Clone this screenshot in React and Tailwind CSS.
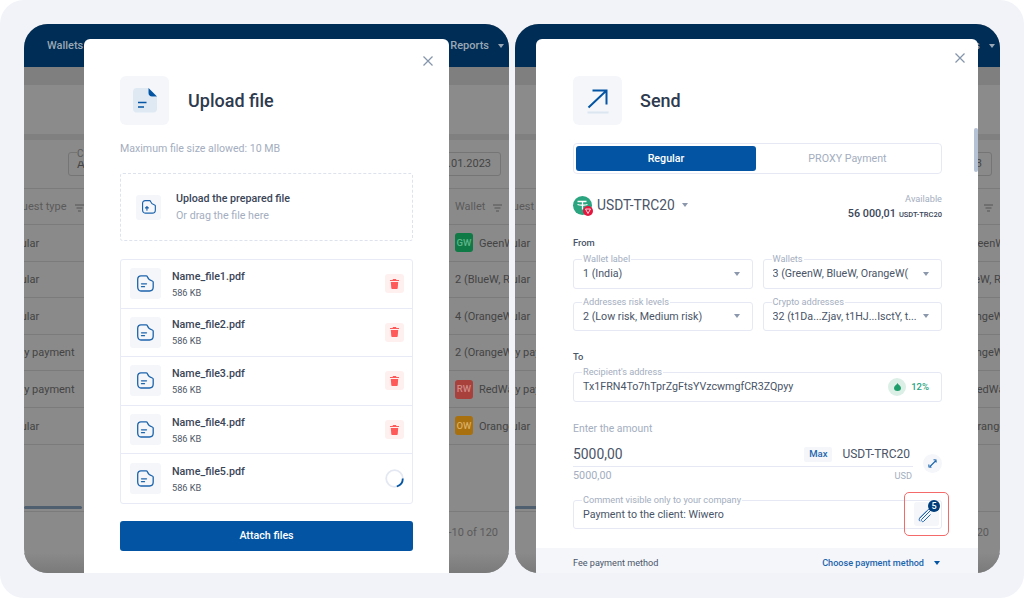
import React from 'react';

const rows = [
  { type: 'Regular', badge: 'GW', color: 'bg-[#0F7A45]', badgeText: 'text-[#5FB58A]', wallet: 'GeenWallet' },
  { type: 'Regular', wallet: '2 (BlueW, RedW)' },
  { type: 'Regular', wallet: '4 (OrangeW, BlueW)' },
  { type: 'Proxy payment', wallet: '2 (OrangeW, RedW)' },
  { type: 'Proxy payment', badge: 'RW', color: 'bg-[#A8403C]', badgeText: 'text-[#D08A86]', wallet: 'RedWallet' },
  { type: 'Regular', badge: 'OW', color: 'bg-[#A9700F]', badgeText: 'text-[#D9AE62]', wallet: 'OrangeWallet' },
];

const files = ['Name_file1.pdf', 'Name_file2.pdf', 'Name_file3.pdf', 'Name_file4.pdf', 'Name_file5.pdf'];

const Caret = ({ className = 'border-t-[#8B97AB]' }) => (
  <span className={`inline-block h-0 w-0 shrink-0 border-l-[3.5px] border-r-[3.5px] border-t-[4px] border-l-transparent border-r-transparent ${className}`} />
);

const FilterIcon = () => (
  <svg width="10" height="8" viewBox="0 0 10 8" fill="none" stroke="#555" strokeWidth="1">
    <path d="M0 1h9M1.5 4h6M3 7h3" />
  </svg>
);

const CloseIcon = () => (
  <svg width="10" height="10" viewBox="0 0 10 10" fill="none" stroke="#8494AA" strokeWidth="1.2">
    <path d="M.5.5l9 9M9.5.5l-9 9" />
  </svg>
);

const FileIcon = () => (
  <svg width="17" height="17" viewBox="0 0 17 17" fill="none" stroke="#1C64AC" strokeWidth="1.3" strokeLinejoin="round" strokeLinecap="round">
    <path d="M4 .8h5.200c.6 0 .9.3 1.100.8.600 2 2 3.400 5 4.400.6.2.9.5.9 1.100v5c0 2.200-1.500 3.900-3.700 3.900H4C1.900 16 .7 14.300.7 12.100V4.300C.7 2.300 2 .8 4 .8z" />
    <path d="M4.500 8.800h5M4.500 11.700h3" />
  </svg>
);

const UploadFileIcon = () => (
  <svg width="14" height="14" viewBox="0 0 17 17" fill="none" stroke="#1C64AC" strokeWidth="1.400" strokeLinejoin="round" strokeLinecap="round">
    <path d="M4 .8h5.200c.6 0 .9.3 1.100.8.600 2 2 3.400 5 4.400.6.2.9.5.9 1.100v5c0 2.200-1.500 3.900-3.700 3.900H4C1.900 16 .7 14.300.7 12.100V4.300C.7 2.300 2 .8 4 .8z" />
    <path d="M6 8v4.500M4.300 9.700L6 8l1.700 1.700" />
  </svg>
);

const TrashIcon = () => (
  <svg width="9" height="10" viewBox="0 0 9 10" fill="#FF5A5A">
    <path d="M3 0h3l.4 1H9v1H0V1h2.600L3 0zM.8 3h7.400l-.5 6.200c0 .5-.4.8-.8.800H2.100c-.4 0-.8-.3-.8-.8L.8 3z" />
  </svg>
);

const Spinner = () => (
  <svg width="19" height="19" viewBox="0 0 19 19" fill="none">
    <circle cx="9.500" cy="9.500" r="8.300" stroke="#E3E8F2" strokeWidth="1.800" />
    <path d="M17.800 9.500a8.300 8.300 0 0 1-6 8" stroke="#0355A3" strokeWidth="1.800" />
  </svg>
);

const Background = () => (
  <div className="absolute inset-0 flex flex-col bg-[#8A8A8A] text-[11px] text-[#444444]">
    <div className="flex h-[43px] shrink-0 items-center justify-between bg-[#002D55] pl-[23px] pr-[5px] pt-[1px] text-[11px] font-medium text-[#9AA8B6]">
      <span>Wallets</span>
      <span className="flex items-center gap-[9px]">
        Reports
        <Caret className="border-t-[#9AA8B6]" />
      </span>
    </div>
    <div className="h-[18px] shrink-0 bg-[#7F7F7F]" />
    <div className="h-[49px] shrink-0 bg-[#8B8B8B]" />
    <div className="h-[6px] shrink-0 bg-[#808080]" />
    <div className="flex h-[49px] shrink-0 items-center justify-between border-b border-[#7B7B7B] pl-[44px] pr-[8px]">
      <div className="relative flex h-[24px] w-[120px] items-center rounded-[3px] border border-[#757575] pl-[8px] text-[12px]">
        <span className="absolute -top-[7px] left-[8px] bg-[#8A8A8A] text-[10px] text-[#5A5A5A]">Currency</span>
        All
      </div>
      <div className="flex h-[24px] w-[120px] items-center justify-end rounded-[3px] border border-[#757575] pr-[9px]">01.01.2023</div>
    </div>
    <div className="flex h-[36px] shrink-0 items-center border-b border-[#7B7B7B] pt-[2px] text-[#5A5A5A]">
      <span className="-ml-[21px] flex w-[452px] shrink-0 items-center gap-[8px] whitespace-nowrap">
        Request type
        <FilterIcon />
      </span>
      <span className="flex items-center gap-[8px]">
        Wallet
        <FilterIcon />
      </span>
    </div>
    {rows.map((r, i) => (
      <div key={i} className="flex h-[36.600px] shrink-0 items-center border-b border-[#7B7B7B]">
        <span className="-ml-[22px] w-[453px] shrink-0 whitespace-nowrap pt-[2px]">{r.type}</span>
        <span className="flex items-center gap-[6px] whitespace-nowrap">
          {r.badge && (
            <span className={`flex h-[19px] w-[18px] items-center justify-center rounded-[3px] text-[9.500px] font-medium ${r.color} ${r.badgeText}`}>
              {r.badge}
            </span>
          )}
          <span className="pt-[2px]">{r.wallet}</span>
        </span>
      </div>
    ))}
    <div className="mt-[61px] h-[3px] w-[58px] shrink-0 rounded-full bg-[#4F5F70]" />
    <div className="mt-[2px] flex h-[42px] shrink-0 items-center justify-end border-t border-[#7B7B7B] pr-[11px] pt-[2px] text-[#5A5A5A]">1-10 of 120</div>
    <div className="flex-1 bg-gradient-to-b from-[#8A8A8A] to-[#7A7A7A]" />
  </div>
);

const UploadModal = () => (
  <div className="absolute bottom-0 left-[60px] top-[15px] w-[365px] rounded-t-[6px] bg-white px-[36px] pt-[37px]">
    <button className="absolute right-[16px] top-[17px]"><CloseIcon /></button>
    <div className="flex items-center gap-[19px]">
      <div className="flex h-[49px] w-[49px] items-center justify-center rounded-[6px] bg-[#F4F6FA]">
        <svg width="24" height="25" viewBox="0 0 24 25">
          <path d="M4 0h11.500v4c0 3 2 5 5 5H24v11.500a4 4 0 0 1-4 4H4a4 4 0 0 1-4-4V4a4 4 0 0 1 4-4z" fill="#DFE9F4" />
          <path d="M15.500 0L24 8.500h-5c-2 0-3.500-1.500-3.500-3.500V0z" fill="#0355A3" />
          <path d="M5 14.500h8.500" stroke="#0355A3" strokeWidth="1.600" />
          <path d="M5 19h6" stroke="#0355A3" strokeWidth="1.600" />
        </svg>
      </div>
      <h2 className="text-[18px] font-medium text-[#2E3A4E]">Upload file</h2>
    </div>
    <p className="mt-[16px] pt-[1px] text-[10.600px] leading-[14px] text-[#A4AEC0]">Maximum file size allowed: 10 MB</p>
    <div className="mt-[17px] flex h-[68px] items-center gap-[15px] rounded-[3px] border border-dashed border-[#DDE2EC] pl-[15px]">
      <div className="flex h-[25px] w-[25px] items-center justify-center rounded-[3px] bg-[#F4F6FA]">
        <UploadFileIcon />
      </div>
      <div className="flex flex-col gap-[3px] pt-[1px]">
        <span className="text-[10.700px] font-medium leading-[14px] text-[#3A4558]">Upload the prepared file</span>
        <span className="text-[10.700px] leading-[14px] text-[#A4AEC0]">Or drag the file here</span>
      </div>
    </div>
    <div className="mt-[18px] divide-y divide-[#E8EBF5] rounded-[3px] border border-[#E8EBF5]">
      {files.map((f, i) => (
        <div key={f} className="flex h-[48.600px] items-center pl-[9px] pr-[8px]">
          <div className="flex h-[31px] w-[31px] items-center justify-center rounded-[3px] bg-[#F4F6FA]">
            <FileIcon />
          </div>
          <div className="ml-[11px] flex flex-col gap-[2px] pt-[1px]">
            <span className="text-[10.700px] font-medium leading-[14px] text-[#3A4558]">{f}</span>
            <span className="text-[9.200px] leading-[13px] text-[#4E5868]">586 KB</span>
          </div>
          {i === 4 ? (
            <div className="ml-auto flex h-[19px] w-[19px] items-center justify-center"><Spinner /></div>
          ) : (
            <div className="ml-auto flex h-[19px] w-[19px] items-center justify-center rounded-[3px] bg-[#FFF0F0]"><TrashIcon /></div>
          )}
        </div>
      ))}
    </div>
    <button className="mt-[17px] flex h-[30px] w-full items-center justify-center rounded-[3px] bg-[#0355A3] text-[10.700px] font-medium text-white">
      Attach files
    </button>
  </div>
);

const Field = ({ label, value, className = '', children }) => (
  <div className={`relative flex h-[29.500px] items-center rounded-[3px] border border-[#E6E9F3] pl-[9px] pr-[12px] text-[10.700px] text-[#4A5568] ${className}`}>
    <span className="absolute -top-[7px] left-[8px] bg-white px-[1px] text-[9.200px] leading-[12px] text-[#A4AEC0]">{label}</span>
    <span className="flex-1 overflow-hidden whitespace-nowrap pt-[1px]">{value}</span>
    {children}
  </div>
);

const SendModal = () => (
  <div className="absolute bottom-0 left-[21px] right-[22px] top-[15px] flex flex-col overflow-hidden rounded-t-[6px] bg-white">
    <button className="absolute right-[13px] top-[14px]"><CloseIcon /></button>
    <div className="absolute right-0 top-[89px] h-[44px] w-[4px] rounded-full bg-[#B5C2D6]" />
    <div className="flex-1 pl-[37px] pr-[36px] pt-[37px]">
      <div className="flex items-center gap-[18px]">
        <div className="flex h-[49px] w-[49px] items-center justify-center rounded-[6px] bg-[#F4F6FA]">
          <svg width="24" height="26" viewBox="0 0 24 26" fill="none">
            <path d="M2.500 19.500L20.500 2.500M6.500 2.500h14v14" stroke="#0355A3" strokeWidth="2" />
            <path d="M1.500 24.500h21" stroke="#DCE6F1" strokeWidth="2" />
          </svg>
        </div>
        <h2 className="text-[18px] font-medium text-[#2E3A4E]">Send</h2>
      </div>
      <div className="mt-[18px] flex h-[31px] rounded-[4px] border border-[#E6E9F3] p-[2px] text-[10.700px]">
        <div className="flex w-[180px] items-center justify-center rounded-[3px] bg-[#0355A3] pt-[1px] font-medium text-white">Regular</div>
        <div className="flex flex-1 items-center justify-center pt-[1px] text-[#A4AEC0]">PROXY Payment</div>
      </div>
      <div className="mt-[18px] flex items-start justify-between">
        <div className="mt-[3px] flex items-center">
          <div className="relative h-[19px] w-[19px] rounded-full bg-[#2BA57F]">
            <svg width="19" height="19" viewBox="0 0 19 19" fill="none" stroke="#fff" strokeWidth="1.600">
              <path d="M4.500 5.500h9M9.500 5.500v8M4.500 8.500c2 1 8 1 10 0" strokeWidth="1.300" />
            </svg>
            <span className="absolute -bottom-[1px] -right-[1px] flex h-[10px] w-[10px] items-center justify-center rounded-full bg-[#E5173F]">
              <svg width="6" height="6" viewBox="0 0 6 6" fill="none" stroke="#fff" strokeWidth=".8"><path d="M.5 1h5L3 5.500z" /></svg>
            </span>
          </div>
          <span className="ml-[5px] text-[13.800px] text-[#4A5568]">USDT-TRC20</span>
          <span className="ml-[7px] flex"><Caret /></span>
        </div>
        <div className="flex flex-col items-end">
          <span className="text-[9.200px] leading-[13px] text-[#A4AEC0]">Available</span>
          <span className="mt-[1px] flex items-baseline gap-[3px] font-medium text-[#3A4558]">
            <span className="text-[10.800px]">56 000,01</span>
            <span className="text-[7.500px]">USDT-TRC20</span>
          </span>
        </div>
      </div>
      <p className="mt-[14px] text-[9.400px] font-medium leading-[13px] text-[#4A5568]">From</p>
      <div className="mt-[10px] grid grid-cols-2 gap-x-[10px] gap-y-[13px]">
        <Field label="Wallet label" value="1 (India)"><Caret /></Field>
        <Field label="Wallets" value="3 (GreenW, BlueW, OrangeW("><Caret /></Field>
        <Field label="Addresses risk levels" value="2 (Low risk, Medium risk)"><Caret /></Field>
        <Field label="Crypto addresses" value="32 (t1Da...Zjav, t1HJ...IsctY, t..."><Caret /></Field>
      </div>
      <p className="mt-[19px] text-[9.400px] font-medium leading-[13px] text-[#4A5568]">To</p>
      <Field className="mt-[9px]" label="Recipient's address" value="Tx1FRN4To7hTprZgFtsYVzcwmgfCR3ZQpyy">
        <span className="flex h-[18px] w-[18px] items-center justify-center rounded-full bg-[#DCEFE7]">
          <svg width="7" height="8" viewBox="0 0 7 8" fill="#1E9E6A"><path d="M3.500 0C4 1.500 7 3 7 5a3.500 3 0 0 1-7 0c0-2 3-3.500 3.500-5z" /></svg>
        </span>
        <span className="ml-[5px] text-[9.500px] font-medium text-[#2BA57F]">12%</span>
      </Field>
      <p className="mt-[19px] text-[10.400px] leading-[15px] text-[#A4AEC0]">Enter the amount</p>
      <div className="mt-[9px] flex items-center gap-[10px]">
        <div className="flex-1">
          <div className="flex h-[22px] items-center border-b border-[#E6E9F3] pb-[2px] pr-[3px] text-[#4A5568]">
            <span className="flex-1 text-[13.900px]">5000,00</span>
            <span className="flex h-[15px] w-[28px] items-center justify-center rounded-[2px] bg-[#F4F6FA] text-[9.500px] font-medium text-[#1C64AC]">Max</span>
            <span className="ml-[10px] text-[12px]">USDT-TRC20</span>
          </div>
          <div className="mt-[1px] flex items-center justify-between pr-[1px] text-[#A4AEC0]">
            <span className="text-[10.800px] leading-[15px]">5000,00</span>
            <span className="text-[9.200px] leading-[15px]">USD</span>
          </div>
        </div>
        <div className="flex h-[19px] w-[19px] items-center justify-center rounded-full bg-[#F4F6FA]">
          <svg width="11" height="11" viewBox="0 0 11 11" fill="none" stroke="#1C64AC" strokeWidth="1.100">
            <path d="M3 8.500L8.500 3M6.500 1.800l2.500.2.200 2.500M1.800 6.500L2 9l2.500.2" />
          </svg>
        </div>
      </div>
      <Field className="mt-[17px]" label="Comment visible only to your company" value="Payment to the client: Wiwero" />
    </div>
    <div className="flex h-[25px] shrink-0 items-start justify-between bg-[#F4F6FA] pl-[37px] pr-[38px] pt-[9px] text-[9.100px] leading-[12px]">
      <span className="text-[#4A5568]">Fee payment method</span>
      <span className="flex items-center gap-[10px] font-medium text-[#1C64AC]">
        Choose payment method
        <Caret className="border-t-[#0355A3]" />
      </span>
    </div>
    <div className="absolute right-[29px] top-[453px] flex h-[44px] w-[45px] items-center justify-center rounded-[5px] border-[1.500px] border-[#F46A6A]">
      <div className="relative flex h-[24px] w-[25px] items-center justify-center rounded-[3px] bg-[#F4F6FA]">
        <svg width="15" height="15" viewBox="0 0 15 15" fill="none" stroke="#1C64AC" strokeWidth="1" className="-ml-[3px] mt-[3px]">
          <path d="M13 2L3.800 11.200c-.8.800-.5 1.500 0 2 .5.500 1.300.700 2 0L12.500 6.500M10.800 1L2 9.800c-1.300 1.300-.9 2.800 0 3.500M8.800 3L1.800 10" />
        </svg>
        <span className="absolute -right-[1px] -top-[2px] flex h-[12px] w-[12px] items-center justify-center rounded-full bg-[#003D7A] text-[9px] font-medium leading-none text-white">5</span>
      </div>
    </div>
  </div>
);

const Panel = ({ children }) => (
  <div className="relative h-[549px] w-[485px] shrink-0 overflow-hidden rounded-[24px]">
    <Background />
    {children}
  </div>
);

export default function App() {
  return (
    <div className="h-[598px] w-[1024px] overflow-hidden bg-white font-['Roboto',sans-serif]">
      <div className="flex h-full gap-[6px] rounded-[24px] bg-[#F1F3F8] p-[24px] pb-0">
        <Panel><UploadModal /></Panel>
        <Panel><SendModal /></Panel>
      </div>
    </div>
  );
}
